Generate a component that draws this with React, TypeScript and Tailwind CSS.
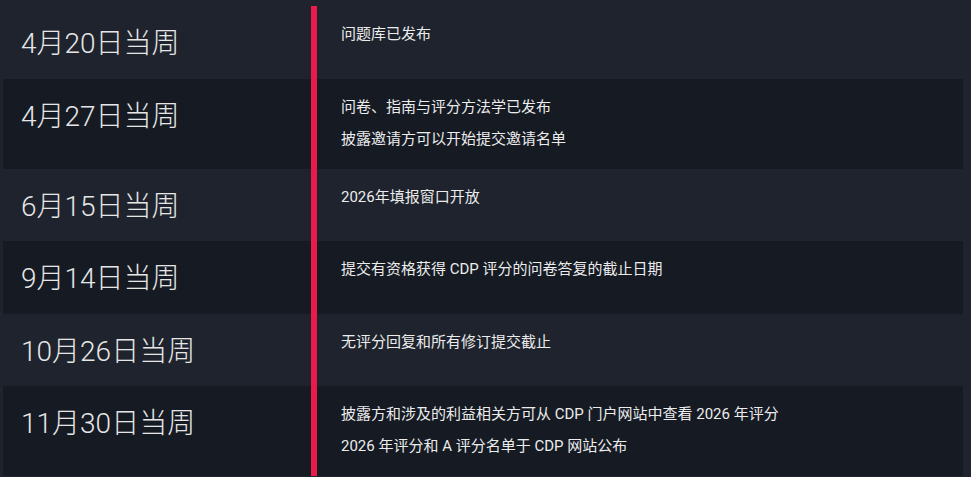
const timeline = [
  { week: "4月20日当周", items: ["问题库已发布"] },
  { week: "4月27日当周", items: ["问卷、指南与评分方法学已发布", "披露邀请方可以开始提交邀请名单"] },
  { week: "6月15日当周", items: ["2026年填报窗口开放"] },
  { week: "9月14日当周", items: ["提交有资格获得 CDP 评分的问卷答复的截止日期"] },
  { week: "10月26日当周", items: ["无评分回复和所有修订提交截止"] },
  {
    week: "11月30日当周",
    items: ["披露方和涉及的利益相关方可从 CDP 门户网站中查看 2026 年评分", "2026 年评分和 A 评分名单于 CDP 网站公布"],
  },
];

export default function App() {
  return (
    <div
      className="min-h-[477px] w-[971px] bg-[#1e232d] pt-[6px] text-[#e6e6e6]"
      style={{ fontFamily: 'Roboto, "Noto Sans CJK SC", sans-serif' }}
    >
      <div className="ml-[3px] w-[960px]">
        {timeline.map((row, i) => (
          <div key={row.week} className={`flex ${i % 2 === 1 ? "bg-[#151a23]" : ""}`}>
            {/* Week label */}
            <div className="w-[308px] shrink-0 pt-5 pb-4 pl-[18px] text-[28px] font-light leading-[36.5px]">
              {row.week}
            </div>
            {/* Milestones */}
            <div className="flex flex-1 flex-col gap-3 border-l-[6px] border-[#ea1a4b] pt-[18px] pb-5 pl-6 text-[15px] leading-5 text-[#ececec]">
              {row.items.map((item) => (
                <p key={item}>{item}</p>
              ))}
            </div>
          </div>
        ))}
      </div>
    </div>
  );
}
